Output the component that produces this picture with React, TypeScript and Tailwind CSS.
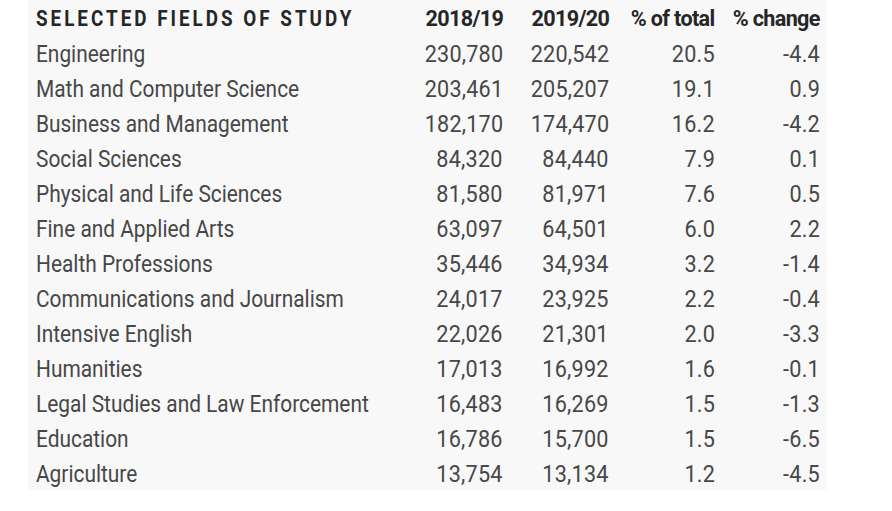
const rows: [string, string, string, string, string][] = [
  ['Engineering', '230,780', '220,542', '20.5', '-4.4'],
  ['Math and Computer Science', '203,461', '205,207', '19.1', '0.9'],
  ['Business and Management', '182,170', '174,470', '16.2', '-4.2'],
  ['Social Sciences', '84,320', '84,440', '7.9', '0.1'],
  ['Physical and Life Sciences', '81,580', '81,971', '7.6', '0.5'],
  ['Fine and Applied Arts', '63,097', '64,501', '6.0', '2.2'],
  ['Health Professions', '35,446', '34,934', '3.2', '-1.4'],
  ['Communications and Journalism', '24,017', '23,925', '2.2', '-0.4'],
  ['Intensive English', '22,026', '21,301', '2.0', '-3.3'],
  ['Humanities', '17,013', '16,992', '1.6', '-0.1'],
  ['Legal Studies and Law Enforcement', '16,483', '16,269', '1.5', '-1.3'],
  ['Education', '16,786', '15,700', '1.5', '-6.5'],
  ['Agriculture', '13,754', '13,134', '1.2', '-4.5'],
];

const headers = ['2018/19', '2019/20', '% of total', '% change'];

export default function App() {
  return (
    <div className="w-[892px] h-[511px] bg-white font-['Roboto',sans-serif]">
      <div className="ml-[28px] w-[799px] h-[490px] bg-[#f8f8f8] pl-[8px] pt-[1px]">
        <div className="grid grid-cols-[350px_117px_106px_106px_105px] auto-rows-[35px] items-center">
          <div className="whitespace-nowrap">
            <span className="inline-block origin-left scale-x-[0.855] text-[22px] font-bold tracking-[0.16em] text-[#262626]">
              SELECTED FIELDS OF STUDY
            </span>
          </div>
          {headers.map((h) => (
            <div key={h} className="flex justify-end whitespace-nowrap">
              <span className="inline-block origin-right scale-x-[0.98] text-[22px] font-bold tracking-[-0.03em] text-[#262626]">
                {h}
              </span>
            </div>
          ))}
          {rows.map((r) => (
            <Row key={r[0]} r={r} />
          ))}
        </div>
      </div>
    </div>
  );
}

function Row({ r }: { r: [string, string, string, string, string] }) {
  return (
    <>
      <div className="whitespace-nowrap">
        <span className="inline-block origin-left scale-x-[0.87] text-[24px] text-[#474747]">{r[0]}</span>
      </div>
      {r.slice(1).map((v, i) => (
        <div key={i} className="flex justify-end whitespace-nowrap">
          <span className="inline-block origin-right scale-x-[0.9] text-[24px] tracking-[0.01em] text-[#474747]">{v}</span>
        </div>
      ))}
    </>
  );
}
